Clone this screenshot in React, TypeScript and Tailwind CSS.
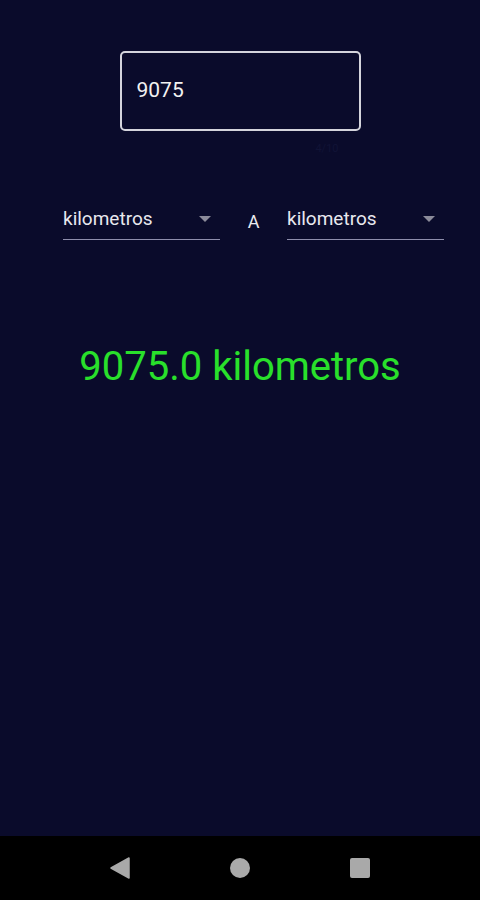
import React, { useState } from 'react';

const units = ['kilometros', 'metros', 'centimetros', 'millas'];

function Dropdown({ value, onChange }: { value: string; onChange: (v: string) => void }) {
  return (
    <div className="relative w-[157px] h-[41px] border-b border-[#8e8eac] flex items-center">
      <span className="text-[19px] text-[#e8e8ee] leading-none pb-[2px]">{value}</span>
      {/* dropdown caret */}
      <svg className="absolute right-[9px] top-[17px]" width="12" height="6" viewBox="0 0 12 6">
        <path d="M0 0 L12 0 L6 6 Z" fill="#8b8b9a" />
      </svg>
      <select
        value={value}
        onChange={(e) => onChange(e.target.value)}
        className="absolute inset-0 opacity-0 cursor-pointer"
      >
        {units.map((u) => (
          <option key={u} value={u}>{u}</option>
        ))}
      </select>
    </div>
  );
}

export default function App() {
  const [amount, setAmount] = useState('9075');
  const [from, setFrom] = useState('kilometros');
  const [to, setTo] = useState('kilometros');

  return (
    <div
      className="w-[480px] h-[900px] bg-[#0a0b2b] flex flex-col"
      style={{ fontFamily: 'Roboto, "Liberation Sans", sans-serif' }}
    >
      <div className="flex-1 flex flex-col items-center">
        {/* Amount input */}
        <div className="mt-[51px] w-[241px] h-[80px] border-2 border-[#d4d4dc] rounded-[5px] flex items-center px-[15px]">
          <input
            value={amount}
            onChange={(e) => setAmount(e.target.value)}
            className="w-full bg-transparent outline-none text-[21px] text-[#f2f2f2]"
          />
        </div>
        <div className="w-[241px] flex justify-end pr-[22px] mt-[12px] h-[12px]">
          <span className="text-[11px] leading-none text-[#111336]">4/10</span>
        </div>

        {/* Unit selectors */}
        <div className="self-start ml-[63px] mt-[44px] flex items-center">
          <Dropdown value={from} onChange={setFrom} />
          <span className="w-[67px] text-center text-[18px] text-[#ececf0] leading-none pt-[5px]">A</span>
          <Dropdown value={to} onChange={setTo} />
        </div>

        {/* Result */}
        <div className="mt-[107px] text-[40px] leading-none text-[#29e02b]">
          {(parseFloat(amount) || 0).toFixed(1)} {to}
        </div>
      </div>

      {/* Android nav bar */}
      <div className="h-[64px] bg-black flex items-center justify-center gap-[100px]">
        <svg width="20" height="22" viewBox="0 0 20 22">
          <path d="M19 1 L19 21 L1 11 Z" fill="#a9a9a9" stroke="#a9a9a9" strokeWidth="1.5" strokeLinejoin="round" />
        </svg>
        <div className="w-[20px] h-[20px] rounded-full bg-[#a9a9a9]" />
        <div className="w-[20px] h-[20px] rounded-[2px] bg-[#a9a9a9]" />
      </div>
    </div>
  );
}
